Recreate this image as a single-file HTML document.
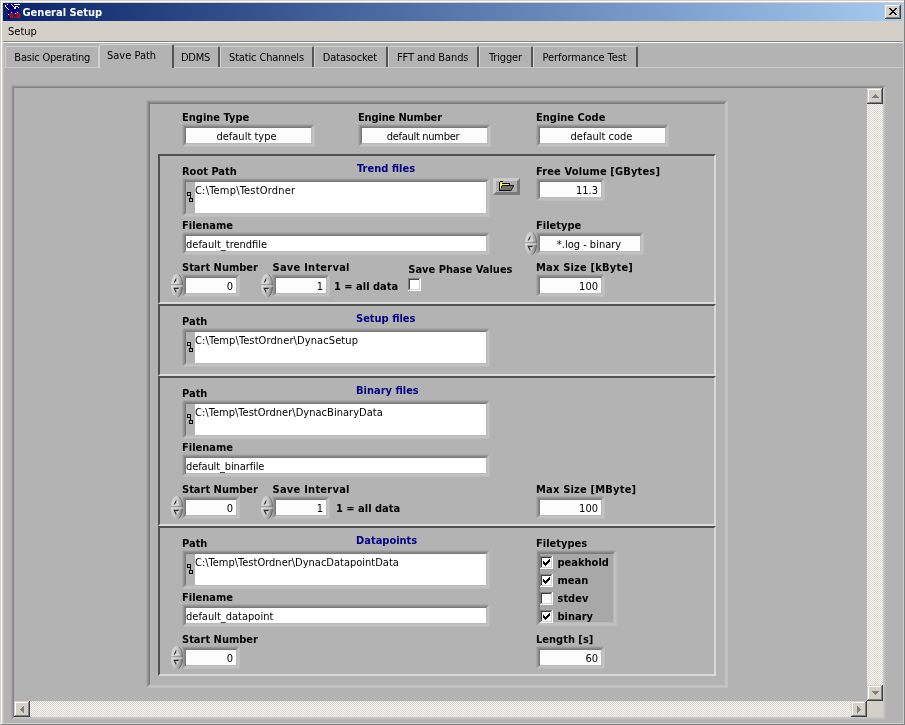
<!DOCTYPE html>
<html><head><meta charset="utf-8"><title>General Setup</title>
<style>
html,body{margin:0;padding:0;}
body{width:905px;height:725px;overflow:hidden;position:relative;background:#D4D0C8;font:11px/14px "DejaVu Sans Condensed","Liberation Sans",sans-serif;}
#w{position:absolute;left:0;top:0;width:905px;height:725px;overflow:hidden;will-change:transform;}
#w>div,.a{position:absolute;box-sizing:content-box;}
.t{position:absolute;white-space:pre;font:11px/14px "DejaVu Sans Condensed","Liberation Sans",sans-serif;color:#000;}
.sk{border:2px solid;border-color:#A0A0A0 #B9B9B9 #B9B9B9 #A0A0A0;}
.sk2{border:2px solid;border-color:#7C7C7C #C3C3C3 #C3C3C3 #7C7C7C;position:relative;}
svg{display:block;overflow:visible}
</style></head><body>
<div id="w">
<div class="a" style="left:0;top:0;width:905px;height:725px;background:#D4D0C8"></div>
<div style="left:1px;top:1px;width:903px;height:1px;background:#fff"></div>
<div style="left:1px;top:1px;width:1px;height:724px;background:#fff"></div>
<div style="left:904px;top:0px;width:1px;height:725px;background:#808080"></div>
<div style="left:3px;top:3px;width:900px;height:18px;background:linear-gradient(to right,#0A246A,#A6CAF0)"></div>
<svg class="a" style="left:5px;top:4px" width="16" height="16" viewBox="0 0 16 16"><polygon points="1.5,0 14,0 13.5,8.5 5,9.5 4.5,15 3,15 3.5,8 1,3" fill="#000080"/><g fill="#fff" shape-rendering="crispEdges"><rect x="2" y="0" width="1" height="1"/><rect x="0" y="1" width="1" height="2"/><rect x="1" y="3" width="1" height="1"/><rect x="2" y="4" width="1" height="1"/><rect x="3" y="5" width="1" height="1"/><rect x="6" y="0" width="1" height="1"/><rect x="7" y="1" width="1" height="1"/><rect x="8" y="2" width="1" height="1"/><rect x="9" y="3" width="2" height="2"/><rect x="10" y="2" width="3" height="1"/><rect x="13" y="3" width="1" height="1"/><rect x="9" y="0" width="6" height="1"/><rect x="3" y="10" width="1" height="1"/><rect x="6" y="8" width="1" height="1"/><rect x="10" y="9" width="1" height="1"/><rect x="12" y="8" width="1" height="1"/></g><text x="4.3" y="14.3" font-family='"DejaVu Sans Condensed","Liberation Sans",sans-serif' font-size="7" font-weight="bold" fill="#f00">0.0</text></svg>
<span class="t" style="left:22.5px;top:6px;font-weight:bold;color:#fff;">General Setup</span>
<div class="a" style="left:885px;top:5px;width:16px;height:14px;background:#D4D0C8;box-shadow:inset -1px -1px 0 #404040,inset 1px 1px 0 #fff,inset -2px -2px 0 #808080"></div>
<svg class="a" style="left:889px;top:8px" width="8" height="7" viewBox="0 0 8 7" shape-rendering="crispEdges"><path d="M0 0h2v1h1v1h2v-1h1v-1h2v1h-1v1h-1v1h-1v1h1v1h1v1h1v1h-2v-1h-1v-1h-2v1h-1v1h-2v-1h1v-1h1v-1h1v-1h-1v-1h-1v-1h-1z" fill="#000"/></svg>
<span class="t" style="left:8px;top:25px;">Setup</span>
<div style="left:3px;top:41px;width:900px;height:1px;background:#808080"></div>
<div style="left:3px;top:42px;width:900px;height:1px;background:#fff"></div>
<div style="left:3px;top:43px;width:900px;height:682px;background:#B3B3B3"></div>
<div style="left:3px;top:67px;width:900px;height:1px;background:#CACACA"></div>
<div style="left:3px;top:43px;width:1px;height:680px;background:#C2C2C2"></div>
<div style="left:5px;top:46px;width:94px;height:21px;background:#B3B3B3;border-top:1px solid #D2D2D2;border-left:1px solid #D2D2D2;border-right:1px solid #D2D2D2;box-sizing:border-box;border-radius:2px 2px 0 0"></div>
<span class="t" style="left:14.3px;top:51px;letter-spacing:-0.2px;">Basic Operating</span>
<div style="left:99px;top:44px;width:75px;height:24px;background:#B3B3B3;border-top:1px solid #D2D2D2;border-left:1px solid #D2D2D2;border-right:2px solid #555;box-sizing:border-box;border-radius:2px 2px 0 0"></div>
<span class="t" style="left:107px;top:49px;">Save Path</span>
<div style="left:174px;top:46px;width:46px;height:21px;background:#B3B3B3;border-top:1px solid #D2D2D2;border-left:none;border-right:2px solid #555;box-sizing:border-box;border-radius:2px 2px 0 0"></div>
<span class="t" style="left:181px;top:51px;letter-spacing:-0.3px;">DDMS</span>
<div style="left:220px;top:46px;width:94px;height:21px;background:#B3B3B3;border-top:1px solid #D2D2D2;border-left:1px solid #D2D2D2;border-right:2px solid #555;box-sizing:border-box;border-radius:2px 2px 0 0"></div>
<span class="t" style="left:229px;top:51px;letter-spacing:-0.15px;">Static Channels</span>
<div style="left:314px;top:46px;width:74px;height:21px;background:#B3B3B3;border-top:1px solid #D2D2D2;border-left:1px solid #D2D2D2;border-right:2px solid #555;box-sizing:border-box;border-radius:2px 2px 0 0"></div>
<span class="t" style="left:322.8px;top:51px;letter-spacing:-0.15px;">Datasocket</span>
<div style="left:388px;top:46px;width:91px;height:21px;background:#B3B3B3;border-top:1px solid #D2D2D2;border-left:1px solid #D2D2D2;border-right:2px solid #555;box-sizing:border-box;border-radius:2px 2px 0 0"></div>
<span class="t" style="left:397px;top:51px;letter-spacing:-0.1px;">FFT and Bands</span>
<div style="left:479px;top:46px;width:54px;height:21px;background:#B3B3B3;border-top:1px solid #D2D2D2;border-left:1px solid #D2D2D2;border-right:2px solid #555;box-sizing:border-box;border-radius:2px 2px 0 0"></div>
<span class="t" style="left:489px;top:51px;letter-spacing:-0.15px;">Trigger</span>
<div style="left:533px;top:46px;width:105px;height:21px;background:#B3B3B3;border-top:1px solid #D2D2D2;border-left:1px solid #D2D2D2;border-right:2px solid #555;box-sizing:border-box;border-radius:2px 2px 0 0"></div>
<span class="t" style="left:542.5px;top:51px;letter-spacing:-0.06px;">Performance Test</span>
<div style="position:absolute;left:11px;top:85px;width:873px;height:633px;border:1px solid;border-color:#A8A8A8 #B9B9B9 #B9B9B9 #A8A8A8;"><div style="width:871px;height:631px;border:1px solid;border-color:#959595 #C0C0C0 #C0C0C0 #959595;"><div style="width:869px;height:629px;border:1px solid;border-color:#828282 #C7C7C7 #C7C7C7 #828282;background:#B3B3B3;"></div></div></div>
<div style="left:867px;top:88px;width:16px;height:613px;background-image:conic-gradient(#fff 25%,#D4D0C8 0 50%,#fff 0 75%,#D4D0C8 0);background-size:2px 2px;background-position:1px 0;"></div>
<div style="left:14px;top:701px;width:853px;height:16px;background-image:conic-gradient(#fff 25%,#D4D0C8 0 50%,#fff 0 75%,#D4D0C8 0);background-size:2px 2px;background-position:0 1px;"></div>
<div style="left:867px;top:701px;width:16px;height:16px;background:#D4D0C8"></div>
<div class="a" style="left:867px;top:88px;width:16px;height:16px;background:#D4D0C8;box-shadow:inset -1px -1px 0 #404040,inset 1px 1px 0 #D4D0C8,inset -2px -2px 0 #808080,inset 2px 2px 0 #fff"></div>
<svg class="a" style="left:867px;top:88px" width="16" height="16" shape-rendering="crispEdges" fill="#808080"><rect x="8" y="6" width="1" height="1"/><rect x="7" y="7" width="3" height="1"/><rect x="6" y="8" width="5" height="1"/><rect x="5" y="9" width="7" height="1"/></svg>
<div class="a" style="left:867px;top:685px;width:16px;height:16px;background:#D4D0C8;box-shadow:inset -1px -1px 0 #404040,inset 1px 1px 0 #D4D0C8,inset -2px -2px 0 #808080,inset 2px 2px 0 #fff"></div>
<svg class="a" style="left:867px;top:685px" width="16" height="16" shape-rendering="crispEdges" fill="#808080"><rect x="5" y="6" width="7" height="1"/><rect x="6" y="7" width="5" height="1"/><rect x="7" y="8" width="3" height="1"/><rect x="8" y="9" width="1" height="1"/></svg>
<div class="a" style="left:14px;top:701px;width:16px;height:16px;background:#D4D0C8;box-shadow:inset -1px -1px 0 #404040,inset 1px 1px 0 #D4D0C8,inset -2px -2px 0 #808080,inset 2px 2px 0 #fff"></div>
<svg class="a" style="left:14px;top:701px" width="16" height="16" shape-rendering="crispEdges" fill="#808080"><rect x="6" y="8" width="1" height="1"/><rect x="7" y="7" width="1" height="3"/><rect x="8" y="6" width="1" height="5"/><rect x="9" y="5" width="1" height="7"/></svg>
<div class="a" style="left:851px;top:701px;width:16px;height:16px;background:#D4D0C8;box-shadow:inset -1px -1px 0 #404040,inset 1px 1px 0 #D4D0C8,inset -2px -2px 0 #808080,inset 2px 2px 0 #fff"></div>
<svg class="a" style="left:851px;top:701px" width="16" height="16" shape-rendering="crispEdges" fill="#808080"><rect x="6" y="5" width="1" height="7"/><rect x="7" y="6" width="1" height="5"/><rect x="8" y="7" width="1" height="3"/><rect x="9" y="8" width="1" height="1"/></svg>
<div style="position:absolute;left:146px;top:100px;width:580px;height:586px;border:1px solid;border-color:#A8A8A8 #BFBFBF #BFBFBF #A8A8A8;"><div style="width:578px;height:584px;border:1px solid;border-color:#989898 #C4C4C4 #C4C4C4 #989898;"><div style="width:576px;height:582px;border:1px solid;border-color:#888888 #BEBEBE #BEBEBE #888888;"><div style="width:574px;height:580px;border:1px solid;border-color:#7A7A7A #B7B7B7 #B7B7B7 #7A7A7A;"></div></div></div></div>
<div class="a" style="left:158px;top:154px;width:554px;height:146px;border:2px solid;border-color:#505050 #DADADA #DADADA #505050"></div>
<div class="a" style="left:158px;top:304px;width:554px;height:68px;border:2px solid;border-color:#505050 #DADADA #DADADA #505050"></div>
<div class="a" style="left:158px;top:376px;width:554px;height:146px;border:2px solid;border-color:#505050 #DADADA #DADADA #505050"></div>
<div class="a" style="left:158px;top:526px;width:554px;height:146px;border:2px solid;border-color:#505050 #DADADA #DADADA #505050"></div>
<span class="t" style="left:182px;top:111px;font-weight:bold;">Engine Type</span>
<div style="position:absolute;left:182px;top:124px;width:131px;height:21px;border:1px solid;border-color:#A8A8A8 #BCBCBC #BCBCBC #A8A8A8;"><div style="width:129px;height:19px;border:1px solid;border-color:#989898 #C2C2C2 #C2C2C2 #989898;"><div style="width:127px;height:17px;border:1px solid;border-color:#888888 #C0C0C0 #C0C0C0 #888888;"><div style="width:125px;height:15px;border:1px solid;border-color:#7A7A7A #BABABA #BABABA #7A7A7A;background:#FCFCFC;"></div></div></div></div>
<span class="t" style="left:184px;top:130px;width:125px;text-align:center;">default type</span>
<span class="t" style="left:358px;top:111px;font-weight:bold;letter-spacing:-0.15px;">Engine Number</span>
<div style="position:absolute;left:358px;top:124px;width:131px;height:21px;border:1px solid;border-color:#A8A8A8 #BCBCBC #BCBCBC #A8A8A8;"><div style="width:129px;height:19px;border:1px solid;border-color:#989898 #C2C2C2 #C2C2C2 #989898;"><div style="width:127px;height:17px;border:1px solid;border-color:#888888 #C0C0C0 #C0C0C0 #888888;"><div style="width:125px;height:15px;border:1px solid;border-color:#7A7A7A #BABABA #BABABA #7A7A7A;background:#FCFCFC;"></div></div></div></div>
<span class="t" style="left:360.5px;top:130px;width:125px;text-align:center;letter-spacing:-0.3px;">default number</span>
<span class="t" style="left:536px;top:111px;font-weight:bold;">Engine Code</span>
<div style="position:absolute;left:536px;top:124px;width:131px;height:21px;border:1px solid;border-color:#A8A8A8 #BCBCBC #BCBCBC #A8A8A8;"><div style="width:129px;height:19px;border:1px solid;border-color:#989898 #C2C2C2 #C2C2C2 #989898;"><div style="width:127px;height:17px;border:1px solid;border-color:#888888 #C0C0C0 #C0C0C0 #888888;"><div style="width:125px;height:15px;border:1px solid;border-color:#7A7A7A #BABABA #BABABA #7A7A7A;background:#FCFCFC;"></div></div></div></div>
<span class="t" style="left:539px;top:130px;width:125px;text-align:center;">default code</span>
<span class="t" style="left:182px;top:165px;font-weight:bold;">Root Path</span>
<span class="t" style="left:357px;top:162px;font-weight:bold;color:#000080;">Trend files</span>
<div style="position:absolute;left:182px;top:178px;width:306px;height:37px;border:1px solid;border-color:#A8A8A8 #BCBCBC #BCBCBC #A8A8A8;"><div style="width:304px;height:35px;border:1px solid;border-color:#989898 #C2C2C2 #C2C2C2 #989898;"><div style="width:302px;height:33px;border:1px solid;border-color:#888888 #C0C0C0 #C0C0C0 #888888;"><div style="width:300px;height:31px;border:1px solid;border-color:#7A7A7A #BABABA #BABABA #7A7A7A;background:#fff;"></div></div></div></div>
<div style="left:186px;top:182px;width:9px;height:31px;background:#B3B3B3"></div>
<svg class="a" style="left:187px;top:192px" width="7" height="11" viewBox="0 0 7 11" shape-rendering="crispEdges"><path d="M0.5 0.5h3v3h-3z M2.5 6.5h3v3h-3z M3.5 3.5v3" fill="none" stroke="#000" stroke-width="1"/></svg>
<span class="t" style="left:195px;top:184px;letter-spacing:0.2px;">C:\Temp\TestOrdner</span>
<div class="a" style="left:493px;top:178px;width:21px;height:11px;border:3px solid;border-color:#CBCBCB #7A7A7A #7A7A7A #CBCBCB;background:#ADADAD"></div>
<svg class="a" style="left:499px;top:181px" width="15" height="10" viewBox="0 0 15 10" shape-rendering="crispEdges"><path d="M0 1h1v-1h3v1h-3v8h11v1h-12z" fill="#000"/><rect x="1" y="1" width="2" height="6" fill="#ff0"/><rect x="1" y="3" width="9" height="1" fill="#ff0"/><rect x="3" y="2" width="7" height="1" fill="#000"/><rect x="10" y="2" width="1" height="3" fill="#000"/><rect x="3" y="4" width="12" height="1" fill="#000"/><path d="M2 5h1v-1h0z" fill="#000"/><polygon points="3,5 14,5 11,9 1,9" fill="#707070" shape-rendering="auto"/><path d="M14 5h1l-3 5h-1z" fill="#000" shape-rendering="auto"/><path d="M3 4h1v1h-1z M2 5h1v2h-1z" fill="#000"/></svg>
<span class="t" style="left:536px;top:165px;font-weight:bold;letter-spacing:0.15px;">Free Volume [GBytes]</span>
<div style="position:absolute;left:536px;top:178px;width:67px;height:21px;border:1px solid;border-color:#A8A8A8 #BCBCBC #BCBCBC #A8A8A8;"><div style="width:65px;height:19px;border:1px solid;border-color:#989898 #C2C2C2 #C2C2C2 #989898;"><div style="width:63px;height:17px;border:1px solid;border-color:#888888 #C0C0C0 #C0C0C0 #888888;"><div style="width:61px;height:15px;border:1px solid;border-color:#7A7A7A #BABABA #BABABA #7A7A7A;background:#FCFCFC;"></div></div></div></div>
<span class="t" style="left:540px;top:184px;width:58px;text-align:right;">11.3</span>
<span class="t" style="left:182px;top:219px;font-weight:bold;">Filename</span>
<div style="position:absolute;left:182px;top:232px;width:306px;height:21px;border:1px solid;border-color:#A8A8A8 #BCBCBC #BCBCBC #A8A8A8;"><div style="width:304px;height:19px;border:1px solid;border-color:#989898 #C2C2C2 #C2C2C2 #989898;"><div style="width:302px;height:17px;border:1px solid;border-color:#888888 #C0C0C0 #C0C0C0 #888888;"><div style="width:300px;height:15px;border:1px solid;border-color:#7A7A7A #BABABA #BABABA #7A7A7A;background:#fff;"></div></div></div></div>
<span class="t" style="left:186px;top:238px;">default_trendfile</span>
<span class="t" style="left:536px;top:219px;font-weight:bold;">Filetype</span>
<div style="position:absolute;left:536px;top:232px;width:106px;height:21px;border:1px solid;border-color:#A8A8A8 #BCBCBC #BCBCBC #A8A8A8;"><div style="width:104px;height:19px;border:1px solid;border-color:#989898 #C2C2C2 #C2C2C2 #989898;"><div style="width:102px;height:17px;border:1px solid;border-color:#888888 #C0C0C0 #C0C0C0 #888888;"><div style="width:100px;height:15px;border:1px solid;border-color:#7A7A7A #BABABA #BABABA #7A7A7A;background:#FCFCFC;"></div></div></div></div>
<span class="t" style="left:539px;top:238px;width:100px;text-align:center;">*.log - binary</span>
<svg class="a" style="left:524px;top:232px" width="13" height="24" viewBox="0 0 13 24"><linearGradient id="sg1" x1="0" y1="0.25" x2="1" y2="0.6"><stop offset="0" stop-color="#E2E2E2"/><stop offset="0.45" stop-color="#C6C6C6"/><stop offset="0.8" stop-color="#A2A2A2"/><stop offset="1" stop-color="#707070"/></linearGradient><clipPath id="sc1"><ellipse cx="6.9" cy="11.6" rx="5.9" ry="11.6"/></clipPath><ellipse cx="6.9" cy="11.6" rx="5.9" ry="11.6" fill="url(#sg1)"/><path d="M8.5 0.6A5.9 11.6 0 0 1 8.5 22.6" fill="none" stroke="#5C5C5C" stroke-width="0.9" opacity="0.75"/><g clip-path="url(#sc1)"><rect x="0" y="10.5" width="13" height="1" fill="#7C7C7C"/><rect x="0" y="11.5" width="13" height="1" fill="#EAEAEA"/></g><path d="M6.4 4.6L4.2 8.8" stroke="#2A2A2A" stroke-width="1.1" fill="none"/><path d="M6.6 4.8L8.8 8.8H4.4" stroke="#E6E6E6" stroke-width="0.9" fill="none"/><path d="M8.8 14.4H4.2L6.4 18.6" stroke="#2A2A2A" stroke-width="1.1" fill="none"/><path d="M8.8 14.6L6.7 18.5" stroke="#E6E6E6" stroke-width="0.9" fill="none"/></svg>
<span class="t" style="left:182px;top:261px;font-weight:bold;">Start Number</span>
<div style="position:absolute;left:182px;top:274px;width:56px;height:21px;border:1px solid;border-color:#A8A8A8 #BCBCBC #BCBCBC #A8A8A8;"><div style="width:54px;height:19px;border:1px solid;border-color:#989898 #C2C2C2 #C2C2C2 #989898;"><div style="width:52px;height:17px;border:1px solid;border-color:#888888 #C0C0C0 #C0C0C0 #888888;"><div style="width:50px;height:15px;border:1px solid;border-color:#7A7A7A #BABABA #BABABA #7A7A7A;background:#FCFCFC;"></div></div></div></div>
<span class="t" style="left:186px;top:280px;width:47px;text-align:right;">0</span>
<svg class="a" style="left:170px;top:274px" width="13" height="24" viewBox="0 0 13 24"><linearGradient id="sg2" x1="0" y1="0.25" x2="1" y2="0.6"><stop offset="0" stop-color="#E2E2E2"/><stop offset="0.45" stop-color="#C6C6C6"/><stop offset="0.8" stop-color="#A2A2A2"/><stop offset="1" stop-color="#707070"/></linearGradient><clipPath id="sc2"><ellipse cx="6.9" cy="11.6" rx="5.9" ry="11.6"/></clipPath><ellipse cx="6.9" cy="11.6" rx="5.9" ry="11.6" fill="url(#sg2)"/><path d="M8.5 0.6A5.9 11.6 0 0 1 8.5 22.6" fill="none" stroke="#5C5C5C" stroke-width="0.9" opacity="0.75"/><g clip-path="url(#sc2)"><rect x="0" y="10.5" width="13" height="1" fill="#7C7C7C"/><rect x="0" y="11.5" width="13" height="1" fill="#EAEAEA"/></g><path d="M6.4 4.6L4.2 8.8" stroke="#2A2A2A" stroke-width="1.1" fill="none"/><path d="M6.6 4.8L8.8 8.8H4.4" stroke="#E6E6E6" stroke-width="0.9" fill="none"/><path d="M8.8 14.4H4.2L6.4 18.6" stroke="#2A2A2A" stroke-width="1.1" fill="none"/><path d="M8.8 14.6L6.7 18.5" stroke="#E6E6E6" stroke-width="0.9" fill="none"/></svg>
<span class="t" style="left:272.5px;top:261px;font-weight:bold;letter-spacing:0.25px;">Save Interval</span>
<div style="position:absolute;left:272px;top:274px;width:56px;height:21px;border:1px solid;border-color:#A8A8A8 #BCBCBC #BCBCBC #A8A8A8;"><div style="width:54px;height:19px;border:1px solid;border-color:#989898 #C2C2C2 #C2C2C2 #989898;"><div style="width:52px;height:17px;border:1px solid;border-color:#888888 #C0C0C0 #C0C0C0 #888888;"><div style="width:50px;height:15px;border:1px solid;border-color:#7A7A7A #BABABA #BABABA #7A7A7A;background:#FCFCFC;"></div></div></div></div>
<span class="t" style="left:276px;top:280px;width:47px;text-align:right;">1</span>
<svg class="a" style="left:260px;top:274px" width="13" height="24" viewBox="0 0 13 24"><linearGradient id="sg3" x1="0" y1="0.25" x2="1" y2="0.6"><stop offset="0" stop-color="#E2E2E2"/><stop offset="0.45" stop-color="#C6C6C6"/><stop offset="0.8" stop-color="#A2A2A2"/><stop offset="1" stop-color="#707070"/></linearGradient><clipPath id="sc3"><ellipse cx="6.9" cy="11.6" rx="5.9" ry="11.6"/></clipPath><ellipse cx="6.9" cy="11.6" rx="5.9" ry="11.6" fill="url(#sg3)"/><path d="M8.5 0.6A5.9 11.6 0 0 1 8.5 22.6" fill="none" stroke="#5C5C5C" stroke-width="0.9" opacity="0.75"/><g clip-path="url(#sc3)"><rect x="0" y="10.5" width="13" height="1" fill="#7C7C7C"/><rect x="0" y="11.5" width="13" height="1" fill="#EAEAEA"/></g><path d="M6.4 4.6L4.2 8.8" stroke="#2A2A2A" stroke-width="1.1" fill="none"/><path d="M6.6 4.8L8.8 8.8H4.4" stroke="#E6E6E6" stroke-width="0.9" fill="none"/><path d="M8.8 14.4H4.2L6.4 18.6" stroke="#2A2A2A" stroke-width="1.1" fill="none"/><path d="M8.8 14.6L6.7 18.5" stroke="#E6E6E6" stroke-width="0.9" fill="none"/></svg>
<span class="t" style="left:334px;top:280px;font-weight:bold;">1 = all data</span>
<span class="t" style="left:408.3px;top:263px;font-weight:bold;">Save Phase Values</span>
<svg class="a" style="left:408px;top:278px" width="13" height="13" viewBox="0 0 13 13" shape-rendering="crispEdges"><rect width="13" height="13" fill="#fff"/><path d="M0 0h12v1h-11v11h-1z" fill="#808080"/><path d="M1 1h10v1h-9v9h-1z" fill="#404040"/><path d="M12 0h1v13h-13v-1h12z" fill="#fff"/><path d="M11 1h1v11h-11v-1h10z" fill="#D4D0C8"/></svg>
<span class="t" style="left:536px;top:261px;font-weight:bold;letter-spacing:0.2px;">Max Size [kByte]</span>
<div style="position:absolute;left:536px;top:274px;width:67px;height:21px;border:1px solid;border-color:#A8A8A8 #BCBCBC #BCBCBC #A8A8A8;"><div style="width:65px;height:19px;border:1px solid;border-color:#989898 #C2C2C2 #C2C2C2 #989898;"><div style="width:63px;height:17px;border:1px solid;border-color:#888888 #C0C0C0 #C0C0C0 #888888;"><div style="width:61px;height:15px;border:1px solid;border-color:#7A7A7A #BABABA #BABABA #7A7A7A;background:#FCFCFC;"></div></div></div></div>
<span class="t" style="left:540px;top:280px;width:58px;text-align:right;">100</span>
<span class="t" style="left:182px;top:315px;font-weight:bold;">Path</span>
<span class="t" style="left:356px;top:312px;font-weight:bold;color:#000080;">Setup files</span>
<div style="position:absolute;left:182px;top:328px;width:306px;height:37px;border:1px solid;border-color:#A8A8A8 #BCBCBC #BCBCBC #A8A8A8;"><div style="width:304px;height:35px;border:1px solid;border-color:#989898 #C2C2C2 #C2C2C2 #989898;"><div style="width:302px;height:33px;border:1px solid;border-color:#888888 #C0C0C0 #C0C0C0 #888888;"><div style="width:300px;height:31px;border:1px solid;border-color:#7A7A7A #BABABA #BABABA #7A7A7A;background:#fff;"></div></div></div></div>
<div style="left:186px;top:332px;width:9px;height:31px;background:#B3B3B3"></div>
<svg class="a" style="left:187px;top:342px" width="7" height="11" viewBox="0 0 7 11" shape-rendering="crispEdges"><path d="M0.5 0.5h3v3h-3z M2.5 6.5h3v3h-3z M3.5 3.5v3" fill="none" stroke="#000" stroke-width="1"/></svg>
<span class="t" style="left:195px;top:334px;letter-spacing:0.1px;">C:\Temp\TestOrdner\DynacSetup</span>
<span class="t" style="left:182px;top:387px;font-weight:bold;">Path</span>
<span class="t" style="left:356px;top:384px;font-weight:bold;color:#000080;">Binary files</span>
<div style="position:absolute;left:182px;top:400px;width:306px;height:37px;border:1px solid;border-color:#A8A8A8 #BCBCBC #BCBCBC #A8A8A8;"><div style="width:304px;height:35px;border:1px solid;border-color:#989898 #C2C2C2 #C2C2C2 #989898;"><div style="width:302px;height:33px;border:1px solid;border-color:#888888 #C0C0C0 #C0C0C0 #888888;"><div style="width:300px;height:31px;border:1px solid;border-color:#7A7A7A #BABABA #BABABA #7A7A7A;background:#fff;"></div></div></div></div>
<div style="left:186px;top:404px;width:9px;height:31px;background:#B3B3B3"></div>
<svg class="a" style="left:187px;top:414px" width="7" height="11" viewBox="0 0 7 11" shape-rendering="crispEdges"><path d="M0.5 0.5h3v3h-3z M2.5 6.5h3v3h-3z M3.5 3.5v3" fill="none" stroke="#000" stroke-width="1"/></svg>
<span class="t" style="left:195px;top:406px;letter-spacing:0.03px;">C:\Temp\TestOrdner\DynacBinaryData</span>
<span class="t" style="left:182px;top:441px;font-weight:bold;">Filename</span>
<div style="position:absolute;left:182px;top:454px;width:306px;height:21px;border:1px solid;border-color:#A8A8A8 #BCBCBC #BCBCBC #A8A8A8;"><div style="width:304px;height:19px;border:1px solid;border-color:#989898 #C2C2C2 #C2C2C2 #989898;"><div style="width:302px;height:17px;border:1px solid;border-color:#888888 #C0C0C0 #C0C0C0 #888888;"><div style="width:300px;height:15px;border:1px solid;border-color:#7A7A7A #BABABA #BABABA #7A7A7A;background:#fff;"></div></div></div></div>
<span class="t" style="left:186px;top:460px;letter-spacing:-0.12px;">default_binarfile</span>
<span class="t" style="left:182px;top:483px;font-weight:bold;">Start Number</span>
<div style="position:absolute;left:182px;top:496px;width:56px;height:21px;border:1px solid;border-color:#A8A8A8 #BCBCBC #BCBCBC #A8A8A8;"><div style="width:54px;height:19px;border:1px solid;border-color:#989898 #C2C2C2 #C2C2C2 #989898;"><div style="width:52px;height:17px;border:1px solid;border-color:#888888 #C0C0C0 #C0C0C0 #888888;"><div style="width:50px;height:15px;border:1px solid;border-color:#7A7A7A #BABABA #BABABA #7A7A7A;background:#FCFCFC;"></div></div></div></div>
<span class="t" style="left:186px;top:502px;width:47px;text-align:right;">0</span>
<svg class="a" style="left:170px;top:496px" width="13" height="24" viewBox="0 0 13 24"><linearGradient id="sg4" x1="0" y1="0.25" x2="1" y2="0.6"><stop offset="0" stop-color="#E2E2E2"/><stop offset="0.45" stop-color="#C6C6C6"/><stop offset="0.8" stop-color="#A2A2A2"/><stop offset="1" stop-color="#707070"/></linearGradient><clipPath id="sc4"><ellipse cx="6.9" cy="11.6" rx="5.9" ry="11.6"/></clipPath><ellipse cx="6.9" cy="11.6" rx="5.9" ry="11.6" fill="url(#sg4)"/><path d="M8.5 0.6A5.9 11.6 0 0 1 8.5 22.6" fill="none" stroke="#5C5C5C" stroke-width="0.9" opacity="0.75"/><g clip-path="url(#sc4)"><rect x="0" y="10.5" width="13" height="1" fill="#7C7C7C"/><rect x="0" y="11.5" width="13" height="1" fill="#EAEAEA"/></g><path d="M6.4 4.6L4.2 8.8" stroke="#2A2A2A" stroke-width="1.1" fill="none"/><path d="M6.6 4.8L8.8 8.8H4.4" stroke="#E6E6E6" stroke-width="0.9" fill="none"/><path d="M8.8 14.4H4.2L6.4 18.6" stroke="#2A2A2A" stroke-width="1.1" fill="none"/><path d="M8.8 14.6L6.7 18.5" stroke="#E6E6E6" stroke-width="0.9" fill="none"/></svg>
<span class="t" style="left:272.5px;top:483px;font-weight:bold;letter-spacing:0.25px;">Save Interval</span>
<div style="position:absolute;left:272px;top:496px;width:56px;height:21px;border:1px solid;border-color:#A8A8A8 #BCBCBC #BCBCBC #A8A8A8;"><div style="width:54px;height:19px;border:1px solid;border-color:#989898 #C2C2C2 #C2C2C2 #989898;"><div style="width:52px;height:17px;border:1px solid;border-color:#888888 #C0C0C0 #C0C0C0 #888888;"><div style="width:50px;height:15px;border:1px solid;border-color:#7A7A7A #BABABA #BABABA #7A7A7A;background:#FCFCFC;"></div></div></div></div>
<span class="t" style="left:276px;top:502px;width:47px;text-align:right;">1</span>
<svg class="a" style="left:260px;top:496px" width="13" height="24" viewBox="0 0 13 24"><linearGradient id="sg5" x1="0" y1="0.25" x2="1" y2="0.6"><stop offset="0" stop-color="#E2E2E2"/><stop offset="0.45" stop-color="#C6C6C6"/><stop offset="0.8" stop-color="#A2A2A2"/><stop offset="1" stop-color="#707070"/></linearGradient><clipPath id="sc5"><ellipse cx="6.9" cy="11.6" rx="5.9" ry="11.6"/></clipPath><ellipse cx="6.9" cy="11.6" rx="5.9" ry="11.6" fill="url(#sg5)"/><path d="M8.5 0.6A5.9 11.6 0 0 1 8.5 22.6" fill="none" stroke="#5C5C5C" stroke-width="0.9" opacity="0.75"/><g clip-path="url(#sc5)"><rect x="0" y="10.5" width="13" height="1" fill="#7C7C7C"/><rect x="0" y="11.5" width="13" height="1" fill="#EAEAEA"/></g><path d="M6.4 4.6L4.2 8.8" stroke="#2A2A2A" stroke-width="1.1" fill="none"/><path d="M6.6 4.8L8.8 8.8H4.4" stroke="#E6E6E6" stroke-width="0.9" fill="none"/><path d="M8.8 14.4H4.2L6.4 18.6" stroke="#2A2A2A" stroke-width="1.1" fill="none"/><path d="M8.8 14.6L6.7 18.5" stroke="#E6E6E6" stroke-width="0.9" fill="none"/></svg>
<span class="t" style="left:336px;top:502px;font-weight:bold;">1 = all data</span>
<span class="t" style="left:536px;top:483px;font-weight:bold;letter-spacing:0.2px;">Max Size [MByte]</span>
<div style="position:absolute;left:536px;top:496px;width:67px;height:21px;border:1px solid;border-color:#A8A8A8 #BCBCBC #BCBCBC #A8A8A8;"><div style="width:65px;height:19px;border:1px solid;border-color:#989898 #C2C2C2 #C2C2C2 #989898;"><div style="width:63px;height:17px;border:1px solid;border-color:#888888 #C0C0C0 #C0C0C0 #888888;"><div style="width:61px;height:15px;border:1px solid;border-color:#7A7A7A #BABABA #BABABA #7A7A7A;background:#FCFCFC;"></div></div></div></div>
<span class="t" style="left:540px;top:502px;width:58px;text-align:right;">100</span>
<span class="t" style="left:182px;top:537px;font-weight:bold;">Path</span>
<span class="t" style="left:356px;top:534px;font-weight:bold;color:#000080;">Datapoints</span>
<div style="position:absolute;left:182px;top:550px;width:306px;height:37px;border:1px solid;border-color:#A8A8A8 #BCBCBC #BCBCBC #A8A8A8;"><div style="width:304px;height:35px;border:1px solid;border-color:#989898 #C2C2C2 #C2C2C2 #989898;"><div style="width:302px;height:33px;border:1px solid;border-color:#888888 #C0C0C0 #C0C0C0 #888888;"><div style="width:300px;height:31px;border:1px solid;border-color:#7A7A7A #BABABA #BABABA #7A7A7A;background:#fff;"></div></div></div></div>
<div style="left:186px;top:554px;width:9px;height:31px;background:#B3B3B3"></div>
<svg class="a" style="left:187px;top:564px" width="7" height="11" viewBox="0 0 7 11" shape-rendering="crispEdges"><path d="M0.5 0.5h3v3h-3z M2.5 6.5h3v3h-3z M3.5 3.5v3" fill="none" stroke="#000" stroke-width="1"/></svg>
<span class="t" style="left:195px;top:556px;letter-spacing:0.0px;">C:\Temp\TestOrdner\DynacDatapointData</span>
<span class="t" style="left:182px;top:591px;font-weight:bold;">Filename</span>
<div style="position:absolute;left:182px;top:604px;width:306px;height:21px;border:1px solid;border-color:#A8A8A8 #BCBCBC #BCBCBC #A8A8A8;"><div style="width:304px;height:19px;border:1px solid;border-color:#989898 #C2C2C2 #C2C2C2 #989898;"><div style="width:302px;height:17px;border:1px solid;border-color:#888888 #C0C0C0 #C0C0C0 #888888;"><div style="width:300px;height:15px;border:1px solid;border-color:#7A7A7A #BABABA #BABABA #7A7A7A;background:#fff;"></div></div></div></div>
<span class="t" style="left:186px;top:610px;">default_datapoint</span>
<span class="t" style="left:182px;top:633px;font-weight:bold;">Start Number</span>
<div style="position:absolute;left:182px;top:646px;width:56px;height:21px;border:1px solid;border-color:#A8A8A8 #BCBCBC #BCBCBC #A8A8A8;"><div style="width:54px;height:19px;border:1px solid;border-color:#989898 #C2C2C2 #C2C2C2 #989898;"><div style="width:52px;height:17px;border:1px solid;border-color:#888888 #C0C0C0 #C0C0C0 #888888;"><div style="width:50px;height:15px;border:1px solid;border-color:#7A7A7A #BABABA #BABABA #7A7A7A;background:#FCFCFC;"></div></div></div></div>
<span class="t" style="left:186px;top:652px;width:47px;text-align:right;">0</span>
<svg class="a" style="left:170px;top:646px" width="13" height="24" viewBox="0 0 13 24"><linearGradient id="sg6" x1="0" y1="0.25" x2="1" y2="0.6"><stop offset="0" stop-color="#E2E2E2"/><stop offset="0.45" stop-color="#C6C6C6"/><stop offset="0.8" stop-color="#A2A2A2"/><stop offset="1" stop-color="#707070"/></linearGradient><clipPath id="sc6"><ellipse cx="6.9" cy="11.6" rx="5.9" ry="11.6"/></clipPath><ellipse cx="6.9" cy="11.6" rx="5.9" ry="11.6" fill="url(#sg6)"/><path d="M8.5 0.6A5.9 11.6 0 0 1 8.5 22.6" fill="none" stroke="#5C5C5C" stroke-width="0.9" opacity="0.75"/><g clip-path="url(#sc6)"><rect x="0" y="10.5" width="13" height="1" fill="#7C7C7C"/><rect x="0" y="11.5" width="13" height="1" fill="#EAEAEA"/></g><path d="M6.4 4.6L4.2 8.8" stroke="#2A2A2A" stroke-width="1.1" fill="none"/><path d="M6.6 4.8L8.8 8.8H4.4" stroke="#E6E6E6" stroke-width="0.9" fill="none"/><path d="M8.8 14.4H4.2L6.4 18.6" stroke="#2A2A2A" stroke-width="1.1" fill="none"/><path d="M8.8 14.6L6.7 18.5" stroke="#E6E6E6" stroke-width="0.9" fill="none"/></svg>
<span class="t" style="left:536px;top:537px;font-weight:bold;">Filetypes</span>
<div style="position:absolute;left:536px;top:550px;width:79px;height:74px;border:1px solid;border-color:#A8A8A8 #BCBCBC #BCBCBC #A8A8A8;"><div style="width:77px;height:72px;border:1px solid;border-color:#989898 #C2C2C2 #C2C2C2 #989898;"><div style="width:75px;height:70px;border:1px solid;border-color:#888888 #C0C0C0 #C0C0C0 #888888;"><div style="width:73px;height:68px;border:1px solid;border-color:#7A7A7A #BABABA #BABABA #7A7A7A;background:#A8A8A8;"></div></div></div></div>
<svg class="a" style="left:540px;top:556px" width="13" height="13" viewBox="0 0 13 13" shape-rendering="crispEdges"><rect width="13" height="13" fill="#fff"/><path d="M0 0h12v1h-11v11h-1z" fill="#808080"/><path d="M1 1h10v1h-9v9h-1z" fill="#404040"/><path d="M12 0h1v13h-13v-1h12z" fill="#fff"/><path d="M11 1h1v11h-11v-1h10z" fill="#D4D0C8"/><g fill="#000"><rect x="3" y="5" width="1" height="3"/><rect x="4" y="6" width="1" height="3"/><rect x="5" y="7" width="1" height="3"/><rect x="6" y="6" width="1" height="3"/><rect x="7" y="5" width="1" height="3"/><rect x="8" y="4" width="1" height="3"/><rect x="9" y="3" width="1" height="3"/></g></svg>
<span class="t" style="left:557.5px;top:556px;font-weight:bold;">peakhold</span>
<svg class="a" style="left:540px;top:574px" width="13" height="13" viewBox="0 0 13 13" shape-rendering="crispEdges"><rect width="13" height="13" fill="#fff"/><path d="M0 0h12v1h-11v11h-1z" fill="#808080"/><path d="M1 1h10v1h-9v9h-1z" fill="#404040"/><path d="M12 0h1v13h-13v-1h12z" fill="#fff"/><path d="M11 1h1v11h-11v-1h10z" fill="#D4D0C8"/><g fill="#000"><rect x="3" y="5" width="1" height="3"/><rect x="4" y="6" width="1" height="3"/><rect x="5" y="7" width="1" height="3"/><rect x="6" y="6" width="1" height="3"/><rect x="7" y="5" width="1" height="3"/><rect x="8" y="4" width="1" height="3"/><rect x="9" y="3" width="1" height="3"/></g></svg>
<span class="t" style="left:557.5px;top:574px;font-weight:bold;">mean</span>
<svg class="a" style="left:540px;top:592px" width="13" height="13" viewBox="0 0 13 13" shape-rendering="crispEdges"><rect width="13" height="13" fill="#fff"/><path d="M0 0h12v1h-11v11h-1z" fill="#808080"/><path d="M1 1h10v1h-9v9h-1z" fill="#404040"/><path d="M12 0h1v13h-13v-1h12z" fill="#fff"/><path d="M11 1h1v11h-11v-1h10z" fill="#D4D0C8"/></svg>
<span class="t" style="left:557.5px;top:592px;font-weight:bold;">stdev</span>
<svg class="a" style="left:540px;top:610px" width="13" height="13" viewBox="0 0 13 13" shape-rendering="crispEdges"><rect width="13" height="13" fill="#fff"/><path d="M0 0h12v1h-11v11h-1z" fill="#808080"/><path d="M1 1h10v1h-9v9h-1z" fill="#404040"/><path d="M12 0h1v13h-13v-1h12z" fill="#fff"/><path d="M11 1h1v11h-11v-1h10z" fill="#D4D0C8"/><g fill="#000"><rect x="3" y="5" width="1" height="3"/><rect x="4" y="6" width="1" height="3"/><rect x="5" y="7" width="1" height="3"/><rect x="6" y="6" width="1" height="3"/><rect x="7" y="5" width="1" height="3"/><rect x="8" y="4" width="1" height="3"/><rect x="9" y="3" width="1" height="3"/></g></svg>
<span class="t" style="left:557.5px;top:610px;font-weight:bold;">binary</span>
<span class="t" style="left:536px;top:633px;font-weight:bold;">Length [s]</span>
<div style="position:absolute;left:536px;top:646px;width:67px;height:21px;border:1px solid;border-color:#A8A8A8 #BCBCBC #BCBCBC #A8A8A8;"><div style="width:65px;height:19px;border:1px solid;border-color:#989898 #C2C2C2 #C2C2C2 #989898;"><div style="width:63px;height:17px;border:1px solid;border-color:#888888 #C0C0C0 #C0C0C0 #888888;"><div style="width:61px;height:15px;border:1px solid;border-color:#7A7A7A #BABABA #BABABA #7A7A7A;background:#FCFCFC;"></div></div></div></div>
<span class="t" style="left:540px;top:652px;width:58px;text-align:right;">60</span>
<div style="left:2px;top:723px;width:902px;height:1px;background:#D4D0C8"></div>
<div style="left:1px;top:724px;width:904px;height:1px;background:#808080"></div>
</div>
</body></html>
